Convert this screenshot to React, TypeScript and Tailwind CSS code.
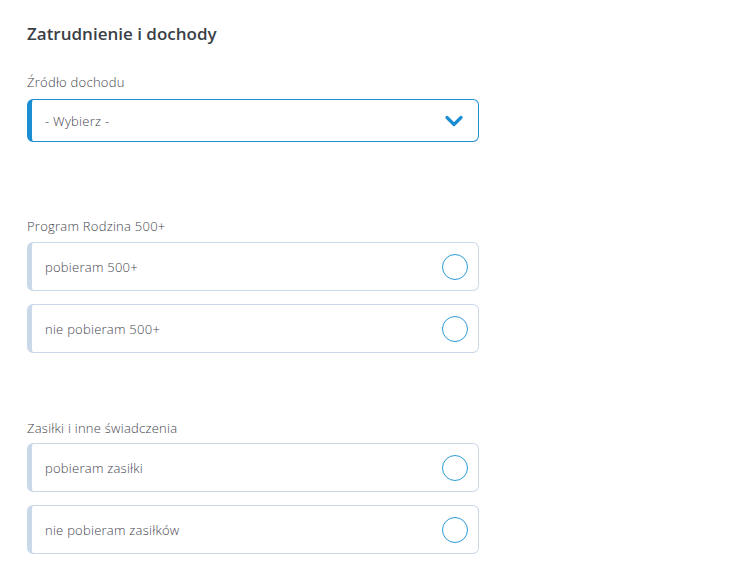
import React from "react";

const font = { fontFamily: "'Open Sans', Lato, sans-serif" };

function Option({ label }: { label: string }) {
  return (
    <div className="flex h-[49px] items-center justify-between rounded-md border border-l-[5px] border-[#c9d9e9] bg-white pl-[13px] pr-[10px]">
      <span className="pt-[2px] text-[13px] font-light tracking-[0.25px] text-[#45454f]">{label}</span>
      <span className="block h-[26px] w-[26px] rounded-full border border-[#2b9bd9]" />
    </div>
  );
}

export default function App() {
  return (
    <div className="min-h-[574px] w-[742px] bg-white pl-[27px] pt-[22px]" style={font}>
      <div className="w-[452px]">
        <h2 className="text-[17px] font-semibold leading-6 text-[#3b3f46]">Zatrudnienie i dochody</h2>
        <div className="mt-[26px] text-[13px] font-light leading-5 tracking-[0.25px] text-[#45464c]">Źródło dochodu</div>
        <div className="mt-[7px] flex h-[43px] items-center justify-between rounded-md border border-l-[5px] border-[#1b8ed3] bg-white pl-[13px] pr-[14px]">
          <span className="pt-[2px] text-[13px] font-light tracking-[0.25px] text-[#45454f]">- Wybierz -</span>
          <svg width="20" height="14" viewBox="0 0 20 14">
            <path d="M3 3.5 L10 10.5 L17 3.5" fill="none" stroke="#1b8ed3" strokeWidth="3.2" strokeLinecap="round" strokeLinejoin="round" />
          </svg>
        </div>

        <div className="mt-[74px] text-[13px] font-light leading-5 tracking-[0.25px] text-[#45464c]">Program Rodzina 500+</div>
        <div className="mt-[6px] flex flex-col gap-[13px]">
          <Option label="pobieram 500+" />
          <Option label="nie pobieram 500+" />
        </div>

        <div className="mt-[65px] text-[13px] font-light leading-5 tracking-[0.25px] text-[#45464c]">Zasiłki i inne świadczenia</div>
        <div className="mt-[5px] flex flex-col gap-[13px]">
          <Option label="pobieram zasiłki" />
          <Option label="nie pobieram zasiłków" />
        </div>
      </div>
    </div>
  );
}
